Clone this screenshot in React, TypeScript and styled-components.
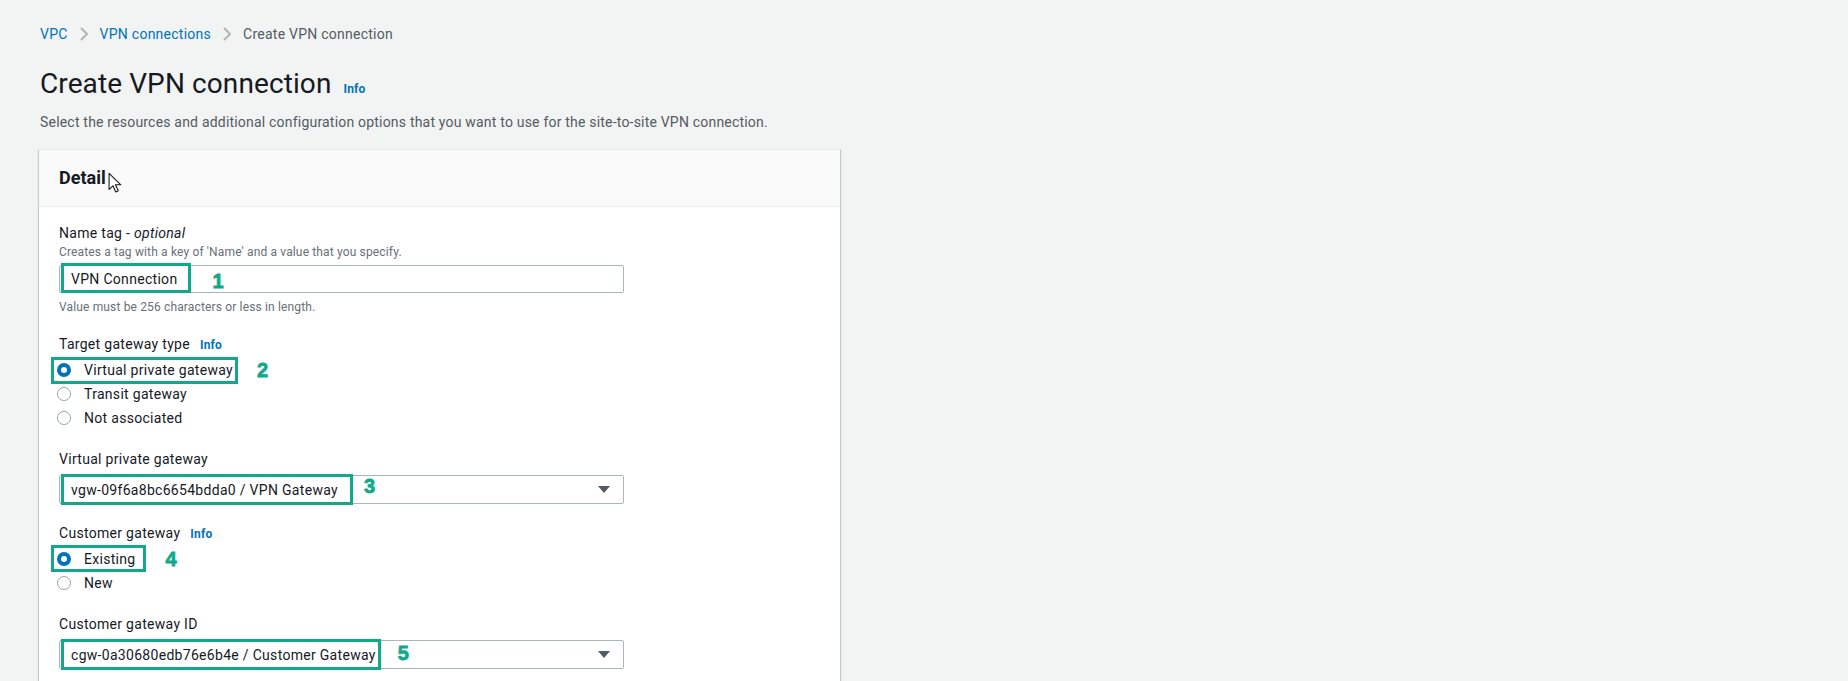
import React, { PropsWithChildren } from 'react';
import styled, { createGlobalStyle } from 'styled-components';

const GlobalStyle = createGlobalStyle`
  html, body {
    margin: 0;
    padding: 0;
    background: #f2f3f3;
    font-family: Roboto, "Liberation Sans", Arial, sans-serif;
    color: #16191f;
  }
`;

const GREEN = '#12a98a';

const Page = styled.div`
  padding: 24px 40px 40px 40px;
`;

const Breadcrumbs = styled.nav`
  display: flex;
  align-items: center;
  gap: 12px;
  font-size: 14px;
  line-height: 20px;
  letter-spacing: 0.25px;
`;

const Crumb = styled.a<{ $current?: boolean }>`
  color: ${(p) => (p.$current ? '#545b64' : '#0073bb')};
  text-decoration: none;
`;

const TitleRow = styled.div`
  display: flex;
  align-items: baseline;
  gap: 12px;
  margin-top: 22px;
`;

const Title = styled.h1`
  margin: 0;
  font-size: 28px;
  line-height: 36px;
  font-weight: 400;
  letter-spacing: 0.1px;
  color: #16191f;
`;

const InfoLink = styled.a`
  color: #0073bb;
  font-size: 12px;
  font-weight: 700;
  letter-spacing: 0.2px;
  text-decoration: none;
`;

const Lead = styled.p`
  margin: 10px 0 0 0;
  font-size: 14px;
  line-height: 20px;
  letter-spacing: 0.2px;
  color: #545b64;
`;

const Card = styled.section`
  width: 801px;
  margin-top: 17px;
  margin-left: -1px;
  background: #fff;
  border-top: 1px solid #eaeded;
  box-shadow: 0 1px 1px 0 rgba(0, 28, 36, 0.3), 1px 1px 1px 0 rgba(0, 28, 36, 0.15),
    -1px 1px 1px 0 rgba(0, 28, 36, 0.15);
`;

const CardHeader = styled.header`
  position: relative;
  background: #fafafa;
  border-bottom: 1px solid #eaeded;
  padding: 16px 20px;
`;

const CardTitle = styled.h2`
  margin: 0;
  font-size: 18px;
  line-height: 24px;
  font-weight: 700;
`;

const Cursor = styled.svg`
  position: absolute;
  left: 69px;
  top: 22px;
`;

const CardBody = styled.div`
  display: flex;
  flex-direction: column;
  gap: 18px;
  padding: 15px 20px 40px 20px;
  letter-spacing: 0.3px;
`;

const Field = styled.div`
  display: flex;
  flex-direction: column;
`;

const LabelRow = styled.div`
  display: flex;
  align-items: baseline;
  gap: 10px;
  font-size: 14px;
  line-height: 22px;
`;

const Hint = styled.div<{ $top?: number }>`
  font-size: 12px;
  line-height: 16px;
  letter-spacing: 0.15px;
  color: #687078;
  margin-top: ${(p) => p.$top ?? 0}px;
`;

const Control = styled.div<{ $height: number }>`
  box-sizing: border-box;
  display: flex;
  align-items: stretch;
  width: 565px;
  height: ${(p) => p.$height}px;
  margin-top: 5px;
  padding: 0 13px 0 11px;
  border: 1px solid #aab7b8;
  border-radius: 2px;
  background: #fff;
  font-size: 14px;
`;

const Value = styled.span`
  display: flex;
  align-items: center;
`;

const Caret = styled.span`
  margin-left: auto;
  align-self: center;
  width: 0;
  height: 0;
  border-left: 6px solid transparent;
  border-right: 6px solid transparent;
  border-top: 7px solid #545b64;
`;

const RadioGroup = styled.div`
  display: flex;
  flex-direction: column;
  align-items: flex-start;
  margin-top: 2px;
`;

const RadioRow = styled.label`
  display: inline-flex;
  align-items: center;
  height: 24px;
  font-size: 14px;
`;

const RadioDot = styled.span<{ $checked?: boolean }>`
  box-sizing: border-box;
  width: 14px;
  height: 14px;
  margin: 0 13px 0 -2px;
  border-radius: 50%;
  background: #fff;
  border: ${(p) => (p.$checked ? '4px solid #0073bb' : '1px solid #95a5a6')};
`;

const Box = styled.span<{ $t: number; $r: number; $b: number; $l: number }>`
  position: relative;
  display: inline-flex;
  align-items: center;
  &::after {
    content: '';
    position: absolute;
    top: ${(p) => p.$t}px;
    right: ${(p) => p.$r}px;
    bottom: ${(p) => p.$b}px;
    left: ${(p) => p.$l}px;
    border: 3px solid ${GREEN};
    pointer-events: none;
  }
`;

const Num = styled.span<{ $left: number; $dy: number }>`
  position: absolute;
  left: calc(100% + ${(p) => p.$left}px);
  top: calc(50% + ${(p) => p.$dy}px);
  transform: translateY(-50%);
  font-family: "Liberation Sans", Arial, sans-serif;
  font-weight: 700;
  font-size: 20px;
  line-height: 20px;
  letter-spacing: 0;
  color: ${GREEN};
  -webkit-text-stroke: 0.8px ${GREEN};
  background: #fff;
  padding: 0 2px;
`;

type MarkProps = {
  n: string;
  inset: [number, number, number, number];
  gap: number;
  dy?: number;
};

function Marked({ n, inset, gap, dy = 0, children }: PropsWithChildren<MarkProps>) {
  const [t, r, b, l] = inset;
  return (
    <Box $t={t} $r={r} $b={b} $l={l}>
      {children}
      <Num $left={-r + gap} $dy={dy}>
        {n}
      </Num>
    </Box>
  );
}

function Chevron() {
  return (
    <svg width="8" height="14" viewBox="0 0 8 14">
      <path d="M1 1l6 6-6 6" fill="none" stroke="#aab7b8" strokeWidth="2" />
    </svg>
  );
}

export default function App() {
  return (
    <>
      <GlobalStyle />
      <Page>
        <Breadcrumbs>
          <Crumb href="#">VPC</Crumb>
          <Chevron />
          <Crumb href="#">VPN connections</Crumb>
          <Chevron />
          <Crumb $current>Create VPN connection</Crumb>
        </Breadcrumbs>

        <TitleRow>
          <Title>Create VPN connection</Title>
          <InfoLink href="#">Info</InfoLink>
        </TitleRow>
        <Lead>
          Select the resources and additional configuration options that you want to use for the
          site-to-site VPN connection.
        </Lead>

        <Card>
          <CardHeader>
            <CardTitle>Detail</CardTitle>
            <Cursor width="15" height="22" viewBox="0 0 14 20">
              <path
                d="M1 1v15l3.6-3.4 2.6 5.8 2.4-1.1-2.6-5.6H12z"
                fill="#fff"
                stroke="#16191f"
                strokeWidth="1"
                strokeLinejoin="round"
              />
            </Cursor>
          </CardHeader>

          <CardBody>
            <Field>
              <LabelRow>
                <span>
                  Name tag - <i>optional</i>
                </span>
              </LabelRow>
              <Hint>Creates a tag with a key of 'Name' and a value that you specify.</Hint>
              <Control $height={28}>
                <Marked n="1" inset={[-3, -14, -1, -10]} gap={19} dy={2}>
                  <Value>VPN Connection</Value>
                </Marked>
              </Control>
              <Hint $top={6}>Value must be 256 characters or less in length.</Hint>
            </Field>

            <Field>
              <LabelRow>
                <span>Target gateway type</span>
                <InfoLink href="#">Info</InfoLink>
              </LabelRow>
              <RadioGroup>
                <Marked n="2" inset={[-1, -5, -2, -8]} gap={17}>
                  <RadioRow>
                    <RadioDot $checked />
                    Virtual private gateway
                  </RadioRow>
                </Marked>
                <RadioRow>
                  <RadioDot />
                  Transit gateway
                </RadioRow>
                <RadioRow>
                  <RadioDot />
                  Not associated
                </RadioRow>
              </RadioGroup>
            </Field>

            <Field>
              <LabelRow>
                <span>Virtual private gateway</span>
              </LabelRow>
              <Control $height={29}>
                <Marked n="3" inset={[-2, -15, -2, -10]} gap={9} dy={-4}>
                  <Value>vgw-09f6a8bc6654bdda0 / VPN Gateway</Value>
                </Marked>
                <Caret />
              </Control>
            </Field>

            <Field>
              <LabelRow>
                <span>Customer gateway</span>
                <InfoLink href="#">Info</InfoLink>
              </LabelRow>
              <RadioGroup>
                <Marked n="4" inset={[-2, -10, -1, -8]} gap={18}>
                  <RadioRow>
                    <RadioDot $checked />
                    Existing
                  </RadioRow>
                </Marked>
                <RadioRow>
                  <RadioDot />
                  New
                </RadioRow>
              </RadioGroup>
            </Field>

            <Field>
              <LabelRow>
                <span>Customer gateway ID</span>
              </LabelRow>
              <Control $height={29}>
                <Marked n="5" inset={[-2, -5, -2, -10]} gap={15} dy={-2}>
                  <Value>cgw-0a30680edb76e6b4e / Customer Gateway</Value>
                </Marked>
                <Caret />
              </Control>
            </Field>
          </CardBody>
        </Card>
      </Page>
    </>
  );
}
